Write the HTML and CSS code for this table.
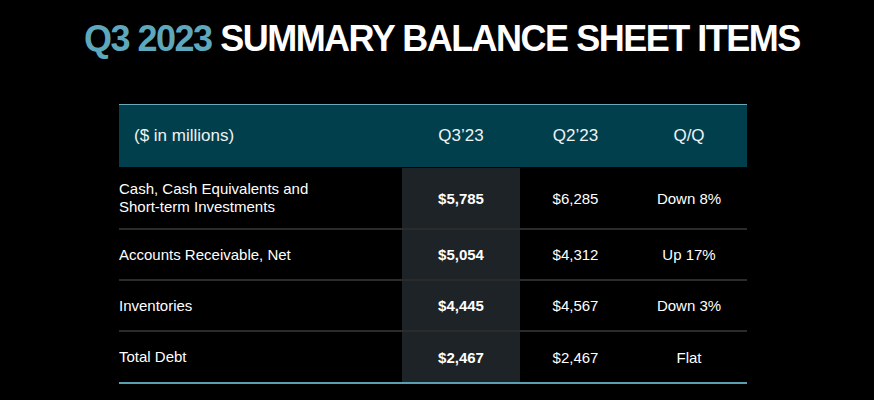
FILE: index.html
```html
<!DOCTYPE html>
<html>
<head>
<meta charset="utf-8">
<link rel="stylesheet" href="styles.css">
</head>
<body>
<h1 class="title"><span class="accent">Q3 2023</span> SUMMARY BALANCE SHEET ITEMS</h1>
<div class="sheet">
  <div class="row head">
    <div class="cell label">($ in millions)</div>
    <div class="cell">Q3’23</div>
    <div class="cell">Q2’23</div>
    <div class="cell">Q/Q</div>
  </div>
  <div class="row r1">
    <div class="cell label">Cash, Cash Equivalents and<br>Short-term Investments</div>
    <div class="cell cur">$5,785</div>
    <div class="cell">$6,285</div>
    <div class="cell">Down 8%</div>
  </div>
  <div class="row">
    <div class="cell label">Accounts Receivable, Net</div>
    <div class="cell cur">$5,054</div>
    <div class="cell">$4,312</div>
    <div class="cell">Up 17%</div>
  </div>
  <div class="row">
    <div class="cell label">Inventories</div>
    <div class="cell cur">$4,445</div>
    <div class="cell">$4,567</div>
    <div class="cell">Down 3%</div>
  </div>
  <div class="row last">
    <div class="cell label">Total Debt</div>
    <div class="cell cur">$2,467</div>
    <div class="cell">$2,467</div>
    <div class="cell">Flat</div>
  </div>
</div>
</body>
</html>
```
FILE: styles.css
```css
html, body {
  margin: 0;
  padding: 0;
  background: #000;
  color: #fff;
  font-family: "Liberation Sans", Arial, sans-serif;
}
body {
  width: 874px;
  height: 400px;
  overflow: hidden;
}
.title {
  margin: 21px 0 0 0;
  padding-left: 84px;
  font-size: 36px;
  line-height: 36px;
  font-weight: bold;
  letter-spacing: -1.5px;
  white-space: nowrap;
  color: #fff;
}
.accent {
  color: #5ea8be;
}
.sheet {
  margin: 47px 0 0 119px;
  width: 628px;
  border-top: 1px solid #6aa9ba;
  border-bottom: 2px solid #5a9fb2;
}
.row {
  box-sizing: border-box;
  display: grid;
  grid-template-columns: 283px 118px 111px 116px;
  height: 51px;
  border-bottom: 2px solid #2b2b2b;
  font-size: 15px;
}
.row.last {
  border-bottom: none;
  height: 50px;
}
.row.head {
  height: 63px;
  background: #023f4c;
  border-bottom: 1px solid #000;
  font-size: 17px;
  color: #eef3f5;
}
.row.r1 {
  height: 62px;
}
.cell {
  display: flex;
  align-items: center;
  justify-content: center;
  text-align: center;
}
.cell.label {
  justify-content: flex-start;
  text-align: left;
  line-height: 18px;
}
.head .cell.label {
  padding-left: 15px;
}
.cell.cur {
  background: #1d2326;
  font-weight: bold;
}
```
